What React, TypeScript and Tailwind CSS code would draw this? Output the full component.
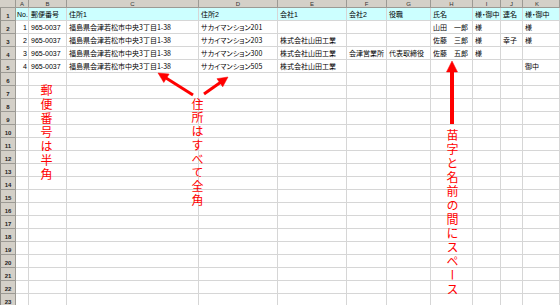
import React from 'react';

const letters = ['A', 'B', 'C', 'D', 'E', 'F', 'G', 'H', 'I', 'J', 'K'];

const addr = '福島県会津若松市中央３丁目１－３８';
const corp = '株式会社山田工業';

const data: string[][] = [
  ['No.', '郵便番号', '住所1', '住所2', '会社1', '会社2', '役職', '氏名', '様・御中', '連名', '様・御中'],
  ['1', '965-0037', addr, 'サカイマンション２０１', '', '', '', '山田　一郎', '様', '', '様'],
  ['2', '965-0037', addr, 'サカイマンション２０３', corp, '', '', '佐藤　三郎', '様', '幸子', '様'],
  ['3', '965-0037', addr, 'サカイマンション３００', corp, '会津営業所', '代表取締役', '佐藤　五郎', '様', '', ''],
  ['4', '965-0037', addr, 'サカイマンション５０５', corp, '', '', '', '', '', '御中'],
];

const TOTAL_ROWS = 23;

type ArrowProps = { x1: number; y1: number; x2: number; y2: number; w: number; hl: number; hw: number };

// straight arrow: shaft + triangle head at (x2, y2)
const Arrow = ({ x1, y1, x2, y2, w, hl, hw }: ArrowProps) => {
  const dx = x2 - x1;
  const dy = y2 - y1;
  const len = Math.hypot(dx, dy);
  const ux = dx / len;
  const uy = dy / len;
  const bx = x2 - ux * (hl - 1);
  const by = y2 - uy * (hl - 1);
  const hx = x2 - ux * hl;
  const hy = y2 - uy * hl;
  const pts = `${x2},${y2} ${hx - uy * hw},${hy + ux * hw} ${hx + uy * hw},${hy - ux * hw}`;
  return (
    <g fill="#ff0000" stroke="#ff0000">
      <line x1={x1} y1={y1} x2={bx} y2={by} strokeWidth={w} />
      <polygon points={pts} strokeWidth={0.5} />
    </g>
  );
};

export default function App() {
  return (
    <div className="relative w-[560px] h-[305px] overflow-hidden bg-white font-['Liberation_Sans','Noto_Sans_CJK_JP',sans-serif] text-black">
      <div className="grid grid-cols-[16px_13px_38px_132px_79px_69px_40px_44px_42px_28px_22px_1fr]">
        {/* column headers */}
        <div className="h-[8px] bg-[#d4d0c8] border-r border-b border-[#9c9a94]" />
        {letters.map((l, i) => (
          <div
            key={l}
            className={`h-[8px] bg-[#d4d0c8] border-r border-b border-[#9c9a94] flex items-center text-[6px] leading-none text-[#333] ${
              i === 10 ? 'justify-start pl-[12px]' : 'justify-center'
            }`}
          >
            {l}
          </div>
        ))}

        {Array.from({ length: TOTAL_ROWS }).map((_, r) => {
          const row = data[r];
          return (
            <React.Fragment key={r}>
              <div className="h-[13px] bg-[#d4d0c8] border-l border-l-[#8c8a84] border-r border-b border-[#9c9a94] flex items-end justify-center pb-[1px] text-[6px] leading-none font-bold text-[#222]">
                {r + 1}
              </div>
              {letters.map((l, c) => {
                const txt = row ? row[c] : '';
                const numCell = c === 0 && r > 0;
                return (
                  <div
                    key={l}
                    className={`h-[13px] border-r border-b border-[#d6d6d6] flex items-center whitespace-nowrap overflow-hidden text-[7px] leading-none [font-feature-settings:'palt','pwid'] ${
                      r === 0 ? 'bg-[#ccffff]' : ''
                    } ${numCell ? 'justify-end pr-[1px]' : c === 0 ? 'pl-[1px]' : 'pl-[2px]'}`}
                  >
                    {txt}
                  </div>
                );
              })}
            </React.Fragment>
          );
        })}
      </div>

      {/* red notes */}
      <svg className="absolute inset-0 pointer-events-none" width={560} height={305}>
        <Arrow x1={193} y1={95} x2={158} y2={73} w={3} hl={10} hw={5} />
        <Arrow x1={204} y1={94} x2={228} y2={77} w={3} hl={10} hw={5} />
        <Arrow x1={452} y1={124} x2={452} y2={61} w={4} hl={11} hw={5.5} />
      </svg>

      <div className="absolute left-[40px] top-[84px] [writing-mode:vertical-rl] font-['Noto_Sans_CJK_JP',sans-serif] text-[12px] leading-none tracking-[2px] text-[#ff0000]">
        郵便番号は半角
      </div>
      <div className="absolute left-[191px] top-[98px] [writing-mode:vertical-rl] font-['Noto_Sans_CJK_JP',sans-serif] text-[12px] leading-none tracking-[1.75px] text-[#ff0000]">
        住所はすべて全角
      </div>
      <div className="absolute left-[446px] top-[129px] [writing-mode:vertical-rl] font-['Noto_Sans_CJK_JP',sans-serif] text-[12px] leading-none tracking-[2px] text-[#ff0000]">
        苗字と名前の間にスペース
      </div>
    </div>
  );
}
